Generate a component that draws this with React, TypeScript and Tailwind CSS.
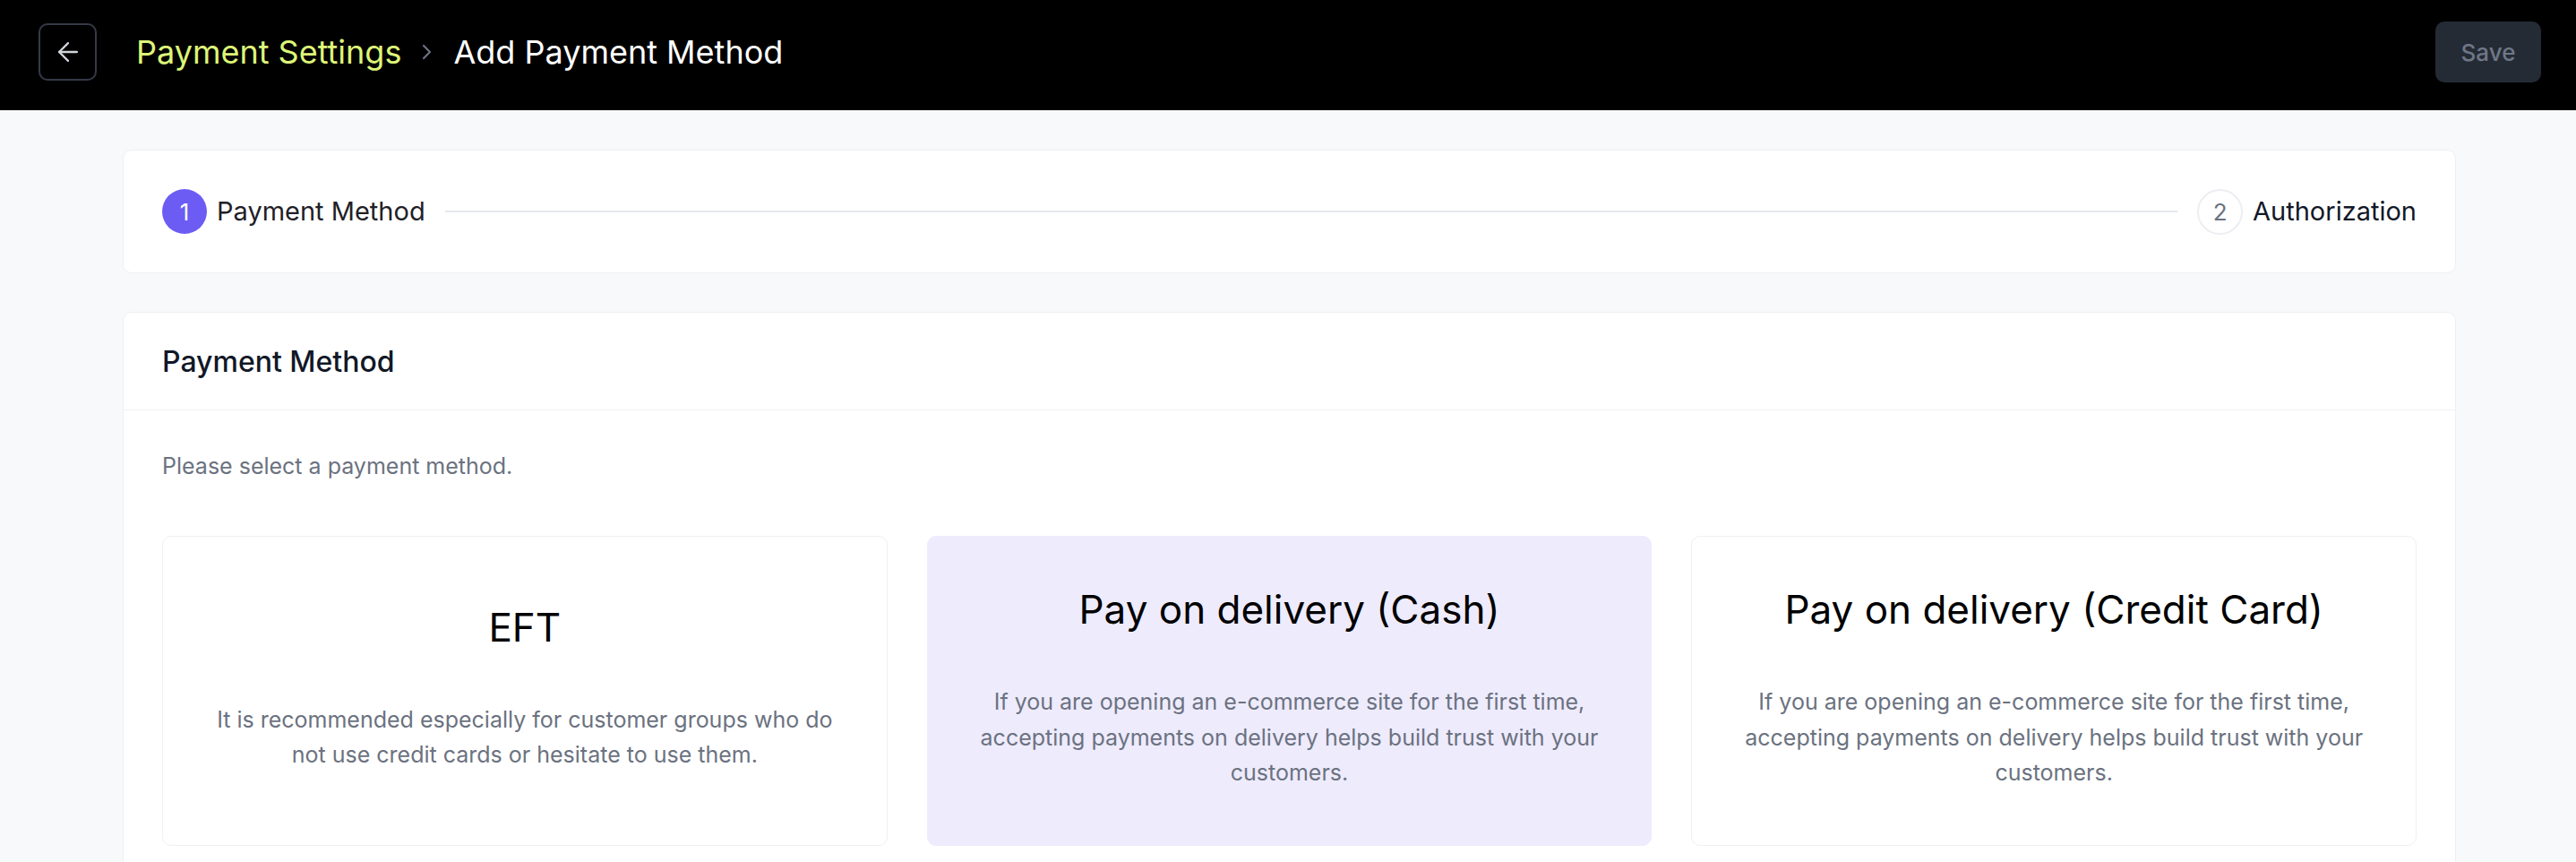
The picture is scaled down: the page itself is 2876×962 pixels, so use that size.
import React, { useState } from 'react';

interface MethodOption {
  id: string;
  title: string;
  description: string;
}

const METHODS: MethodOption[] = [
  {
    id: 'eft',
    title: 'EFT',
    description: 'It is recommended especially for customer groups who do not use credit cards or hesitate to use them.',
  },
  {
    id: 'cash',
    title: 'Pay on delivery (Cash)',
    description: 'If you are opening an e-commerce site for the first time, accepting payments on delivery helps build trust with your customers.',
  },
  {
    id: 'card',
    title: 'Pay on delivery (Credit Card)',
    description: 'If you are opening an e-commerce site for the first time, accepting payments on delivery helps build trust with your customers.',
  },
];

const App: React.FC = () => {
  const [selected, setSelected] = useState('cash');

  return (
    <div className="min-h-screen bg-[#f8f9fb] font-['Inter','Liberation_Sans',sans-serif]">
      {/* top bar */}
      <header className="h-[123px] bg-black flex items-center justify-between pl-[43px] pr-[39px] pb-[7px]">
        <div className="flex items-center gap-[44px]">
          <button className="w-[65px] h-[64px] border-2 border-[#343a46] rounded-[10px] flex items-center justify-center text-[#d1d5db] cursor-pointer">
            <svg width="34" height="34" viewBox="0 0 24 24" fill="none" stroke="currentColor" strokeWidth="1.6" strokeLinecap="round" strokeLinejoin="round">
              <path d="M19 12H5" />
              <path d="M12 19l-7-7 7-7" />
            </svg>
          </button>
          <nav className="flex items-center gap-[23px] text-[36px]">
            <span className="text-[#def578]">Payment Settings</span>
            <svg width="12" height="18" viewBox="0 0 12 18" fill="none" stroke="#6b7280" strokeWidth="2.2" strokeLinecap="round" strokeLinejoin="round">
              <path d="M2 2l7 7-7 7" />
            </svg>
            <span className="text-white">Add Payment Method</span>
          </nav>
        </div>
        <button disabled className="w-[118px] h-[68px] bg-[#252b35] rounded-[10px] text-[26px] font-medium text-[#6f7787]">
          Save
        </button>
      </header>

      <main className="pt-[44px] pb-[60px]">
        <div className="ml-[137px] w-[2605px] flex flex-col gap-[43px]">
          {/* steps */}
          <div className="h-[138px] bg-white border border-[#eef0f3] rounded-[10px] px-[43px] flex items-center">
            <div className="w-[50px] h-[50px] rounded-full bg-[#6c5cf4] text-white text-[26px] flex items-center justify-center">1</div>
            <span className="ml-[11px] text-[29px] text-[#1f2128]">Payment Method</span>
            <div className="flex-1 h-[2px] bg-[#e5e7eb] mx-[22px]" />
            <div className="w-[51px] h-[51px] rounded-full border-2 border-[#eceef2] text-[#6b7280] text-[26px] flex items-center justify-center">2</div>
            <span className="ml-[11px] text-[29px] text-[#111827]">Authorization</span>
          </div>

          {/* method selection */}
          <section className="bg-white border border-[#eef0f3] rounded-[10px]">
            <div className="h-[109px] px-[43px] flex items-center border-b border-[#f0f1f4]">
              <h2 className="text-[32px] font-medium text-[#111827] pt-[2px]">Payment Method</h2>
            </div>
            <div className="px-[43px] pt-[43px] pb-[44px]">
              <p className="text-[25px] leading-[39px] text-[#6b7280]">Please select a payment method.</p>
              <div className="mt-[58px] grid grid-cols-3 gap-[44px]">
                {METHODS.map((m) => (
                  <button
                    key={m.id}
                    onClick={() => setSelected(m.id)}
                    className={
                      selected === m.id
                        ? 'border border-[#eeebfd] bg-[#eeebfd] rounded-[10px] px-[44px] pt-[52px] pb-[60px] flex flex-col items-center justify-center text-center cursor-pointer'
                        : 'border border-[#eef0f3] bg-white rounded-[10px] px-[44px] pt-[52px] pb-[60px] flex flex-col items-center justify-center text-center cursor-pointer'
                    }
                  >
                    <span className="text-[44px] leading-[59px] text-black">{m.title}</span>
                    <span className="mt-[54px] text-[25px] leading-[39.5px] text-[#6b7280]">{m.description}</span>
                  </button>
                ))}
              </div>
            </div>
          </section>
        </div>
      </main>
    </div>
  );
};

export default App;
